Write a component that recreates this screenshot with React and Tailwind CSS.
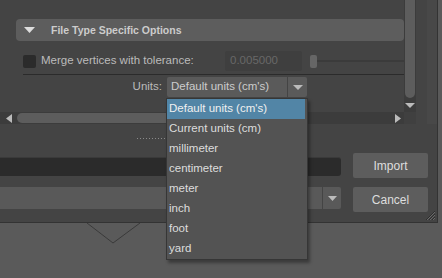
const font = { fontFamily: '"Liberation Sans", Arial, sans-serif' };

const units = [
  "Default units (cm's)",
  'Current units (cm)',
  'millimeter',
  'centimeter',
  'meter',
  'inch',
  'foot',
  'yard',
];

const Tri = ({ className = '', dir = 'down', w = 11, h = 6 }) => {
  const pts = {
    down: `0,0 ${w},0 ${w / 2},${h}`,
    left: `${w},0 ${w},${h} 0,${h / 2}`,
    right: `0,0 0,${h} ${w},${h / 2}`,
  }[dir];
  return (
    <svg width={w} height={h} viewBox={`0 0 ${w} ${h}`} className={className}>
      <polygon points={pts} fill="currentColor" />
    </svg>
  );
};

const App = () => {
  return (
    <div
      className="relative w-[442px] h-[278px] overflow-hidden bg-[#5a5a5a] text-[11.5px] leading-none"
      style={font}
    >
      {/* dialog window */}
      <div className="relative w-[438px] h-[223px] bg-[#444444] border-r border-b border-[#333333] flex flex-col">
        {/* scroll area */}
        <div className="flex h-[124px]">
          <div className="w-[404px] flex flex-col">
            <div className="h-[112px] pt-[19px] pl-[16px]">
              <div className="h-[22px] bg-[#5d5d5d] rounded-sm flex items-center">
                <Tri className="ml-[8px] text-[#dddddd]" />
                <span className="ml-[16px] font-bold text-[10.5px] text-[#cccccc]">
                  File Type Specific Options
                </span>
              </div>

              <div className="mt-[10px] h-[20px] flex items-center">
                <div className="ml-[7px] w-[13px] h-[13px] bg-[#2b2b2b] rounded-[2px]" />
                <div className="w-[189px] pl-[5px] text-[#bbbbbb]">Merge vertices with tolerance:</div>
                <div className="w-[77px] h-[20px] bg-[#3f3f3f] rounded-[2px] flex items-center pl-[5px] text-[#686868]">
                  0.005000
                </div>
                <div className="ml-[8px] w-[7px] h-[13px] bg-[#666666] rounded-[2px]" />
                <div className="flex-1 h-[2px] bg-[#3b3b3b]" />
              </div>

              <div className="mt-[3px] ml-[7px] h-px bg-[#2b2b2b]" />

              <div className="mt-[2px] h-[20px] flex items-center">
                <div className="w-[146px] text-right text-[#bbbbbb]">Units:</div>
                <div className="ml-[5px] w-[120px] h-[20px] bg-[#5a5a5a] flex items-center pl-[4px] text-[#cccccc] rounded-l-[2px]">
                  Default units (cm's)
                </div>
                <div className="ml-px w-[19px] h-[20px] bg-[#5a5a5a] flex items-center justify-center rounded-r-[2px]">
                  <Tri className="text-[#bbbbbb]" w={10} h={5} />
                </div>
              </div>
            </div>

            {/* horizontal scrollbar */}
            <div className="h-[12px] bg-[#3c3c3c] flex items-center">
              <Tri dir="left" w={6} h={9} className="ml-[6px] text-[#bbbbbb]" />
              <div className="ml-[5px] w-[180px] h-[10px] bg-[#5d5d5d] rounded-full" />
              <div className="flex-1" />
              <Tri dir="right" w={6} h={9} className="mr-[3px] text-[#bbbbbb]" />
            </div>
          </div>

          {/* vertical scrollbar */}
          <div className="w-[12px] flex flex-col">
            <div className="h-[112px] bg-[#3c3c3c] flex flex-col items-center">
              <div className="w-[10px] h-[98px] bg-[#5d5d5d] rounded-b-full" />
              <Tri w={10} h={5} className="mt-[5px] text-[#bbbbbb]" />
            </div>
            <div className="h-[12px] bg-[#404040]" />
          </div>

          <div className="flex-1 flex">
            <div className="w-[11px]" />
            <div className="w-[10px] bg-[#484848]" />
          </div>
        </div>

        {/* splitter */}
        <div className="h-[29px] pt-[14px]">
          <div className="ml-[137px] w-[168px] h-px bg-[repeating-linear-gradient(90deg,#8a8a8a_0_1px,transparent_1px_3px)]" />
        </div>

        {/* file name + buttons */}
        <div className="flex">
          <div className="w-[341px] pt-[4px] flex flex-col">
            <div className="h-[19px] bg-[#2b2b2b] rounded-r-[3px] border-t border-[#3a3a3a]" />
            <div className="mt-[11px] h-[22px] flex">
              <div className="flex-1 bg-[#595959]" />
              <div className="ml-px w-[18px] bg-[#595959] rounded-r-[2px] flex items-center justify-center">
                <Tri w={9} h={5} className="text-[#bbbbbb]" />
              </div>
            </div>
          </div>
          <div className="ml-[12px] w-[75px] flex flex-col">
            <button className="h-[25px] bg-[#5d5d5d] rounded-[2px] text-[#dddddd] text-[12px]" style={font}>
              Import
            </button>
            <button className="mt-[9px] h-[25px] bg-[#5d5d5d] rounded-[2px] text-[#dddddd] text-[12px]" style={font}>
              Cancel
            </button>
          </div>
        </div>

        {/* resize grip */}
        <svg width="11" height="11" viewBox="0 0 11 11" className="absolute right-px bottom-px">
          <path d="M10 1 L1 10 M10 4 L4 10 M10 7 L7 10" stroke="#2e2e2e" strokeWidth="1" />
          <path d="M10 2 L2 10 M10 5 L5 10 M10 8 L8 10" stroke="#6a6a6a" strokeWidth="1" />
        </svg>
      </div>

      {/* canvas below */}
      <svg width="56" height="22" viewBox="0 0 56 22" className="ml-[86px]">
        <path d="M1 0 L27 20 L54 0" fill="none" stroke="#3a3a3a" strokeWidth="1" />
      </svg>

      {/* units dropdown */}
      <div className="absolute left-[166px] top-[98px] w-[142px] bg-[#535353] border border-[#363636] shadow-[2px_3px_3px_rgba(0,0,0,0.35)] py-0 pr-[2px]">
        {units.map((u, i) => (
          <div
            key={u}
            className={`h-[20px] flex items-center pl-[2px] ${
              i === 0 ? 'bg-[#5285a6] text-[#f0f0f0]' : 'text-[#dddddd]'
            }`}
          >
            {u}
          </div>
        ))}
      </div>
    </div>
  );
};

export default App;
